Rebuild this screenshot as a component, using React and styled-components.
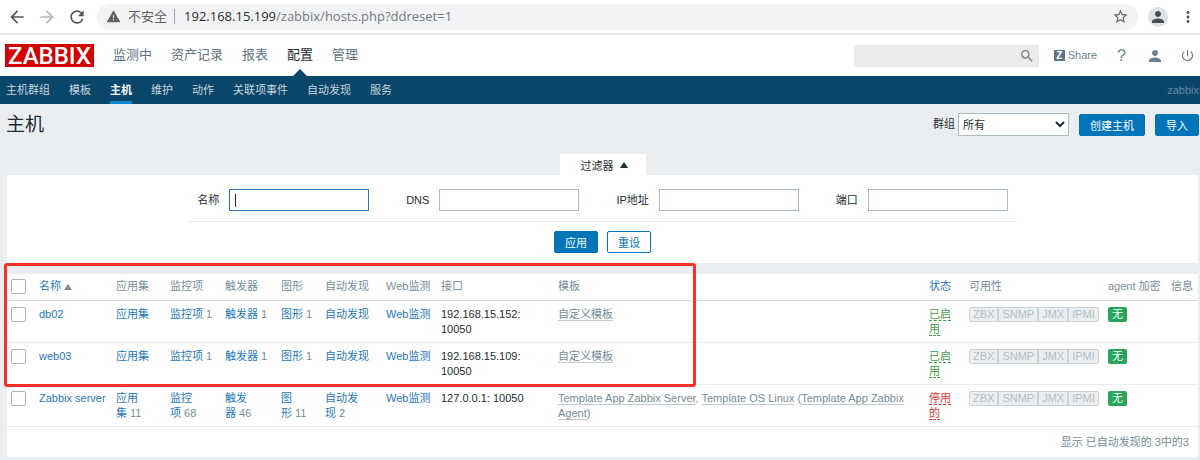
import React from 'react'
import styled, { createGlobalStyle } from 'styled-components';
import {
  MdArrowBack,
  MdArrowForward,
  MdRefresh,
  MdWarning,
  MdStarBorder,
  MdPerson,
  MdMoreVert,
  MdSearch,
  MdPowerSettingsNew,
} from 'react-icons/md';

const GlobalStyle = createGlobalStyle`
  * {
    box-sizing: border-box;
  }
  body {
    margin: 0;
    background: #ebeef0;
    color: #1f2c33;
    font-family: "Liberation Sans", "Noto Sans CJK SC", sans-serif;
    font-size: 11px;
    line-height: 15px;
  }
  a {
    color: #1f78bb;
    text-decoration: none;
  }
  button, input, select {
    font-family: inherit;
    font-size: 11px;
    margin: 0;
  }
`;

/* browser bar */
const BrowserBar = styled.div`
  display: flex;
  align-items: center;
  height: 35px;
  padding: 0 3px 0 7px;
  background: #fff;
  border-bottom: 2px solid #e8e8e8;
`;

const BarButton = styled.button`
  display: flex;
  padding: 0;
  border: 0;
  background: none;
  color: ${props => props.$dim ? '#b4b6b9' : '#55585c'};
  margin-right: 10px;
`;

const Address = styled.div`
  flex: 1;
  display: flex;
  align-items: center;
  height: 26px;
  padding: 0 9px;
  border-radius: 13px;
  background: #f1f3f4;
  color: #5f6368;
  font-family: "Open Sans", "Noto Sans CJK SC", sans-serif;
  font-size: 13px;
`;

const Unsafe = styled.span`
  margin-left: 7px;
  padding-right: 7px;
  border-right: 1px solid #a0a3a7;
`;

const Url = styled.span`
  flex: 1;
  margin-left: 9px;
  color: #75797e;
`;

const Domain = styled.span`
  color: #2b2d30;
`;

const Avatar = styled.button`
  display: flex;
  align-items: center;
  justify-content: center;
  width: 20px;
  height: 20px;
  margin: 0 11px 0 10px;
  padding: 0;
  border: 0;
  border-radius: 50%;
  background: #dee1e6;
  color: #4a4e57;
`;

/* zabbix header */
const Header = styled.header`
  display: flex;
  align-items: center;
  height: 41px;
  padding: 0 5px;
  background: #fff;
`;

const Logo = styled.a`
  width: 89px;
  height: 23px;
  background: #d40000;
  color: #fff;
  font-family: Roboto, sans-serif;
  font-size: 24px;
  font-weight: 500;
  line-height: 24px;
  text-align: center;
`;

const MainMenu = styled.nav`
  flex: 1;
  display: flex;
  gap: 19px;
  margin-left: 19px;
`;

const MainLink = styled.a`
  position: relative;
  height: 41px;
  color: ${props => props.$active ? '#1f2c33' : '#5f7380'};
  font-size: 13px;
  line-height: 39px;

  &::after {
    content: '';
    display: ${props => props.$active ? 'block' : 'none'};
    position: absolute;
    left: 50%;
    bottom: 0;
    margin-left: -7px;
    border: 7px solid transparent;
    border-top-width: 0;
    border-bottom-color: #0a466a;
  }
`;

const Search = styled.form`
  display: flex;
  align-items: center;
  width: 185px;
  height: 22px;
  background: #ebebeb;
`;

const SearchInput = styled.input`
  flex: 1;
  min-width: 0;
  border: 0;
  background: none;
`;

const IconButton = styled.button`
  display: flex;
  padding: 0 4px;
  border: 0;
  background: none;
  color: #6c8290;
`;

const Tools = styled.div`
  display: flex;
  align-items: center;
  gap: 16px;
  margin-left: 15px;

  a {
    display: flex;
    align-items: center;
    color: #6c8290;
  }
`;

const ShareMark = styled.span`
  width: 11px;
  height: 11px;
  margin-right: 3px;
  background: #5d7685;
  color: #fff;
  font-size: 10px;
  font-weight: bold;
  line-height: 11px;
  text-align: center;
`;

const Help = styled.span`
  padding: 0 4px;
  font-size: 16px;
`;

const SubMenu = styled.nav`
  display: flex;
  gap: 19px;
  height: 28px;
  padding: 0 1px 0 6px;
  background: #0a466a;
`;

const SubLink = styled.a`
  height: 28px;
  border-bottom: 3px solid ${props => props.$active ? '#0f86d0' : 'transparent'};
  color: ${props => props.$active ? '#fff' : '#c6d5de'};
  font-weight: ${props => props.$active ? 'bold' : 'normal'};
  line-height: 28px;
`;

const ServerName = styled.span`
  margin-left: auto;
  color: #6188a0;
  line-height: 28px;
`;

/* title row */
const TitleBar = styled.div`
  display: flex;
  align-items: center;
  gap: 10px;
  padding: 9px 1px 0 6px;
`;

const Title = styled.h1`
  flex: 1;
  margin: 0;
  font-size: 19px;
  font-weight: normal;
  line-height: 23px;
`;

const GroupLabel = styled.label`
  display: flex;
  align-items: center;
  gap: 3px;
`;

const Select = styled.select`
  width: 111px;
  height: 23px;
  padding: 0;
  border: 1px solid #acbbc2;
  border-radius: 0;
  background: #fff;
  color: #1f2c33;
`;

const Button = styled.button`
  height: 22px;
  padding: 0 10px;
  border: 1px solid #0275b8;
  border-radius: 2px;
  background: ${props => props.$alt ? '#fff' : '#0275b8'};
  color: ${props => props.$alt ? '#0275b8' : '#fff'};
`;

/* filter */
const Main = styled.main`
  padding: 18px 2px 3px 7px;
`;

const TabRow = styled.div`
  display: flex;
  justify-content: center;
`;

const FilterTab = styled.button`
  display: flex;
  align-items: center;
  gap: 6px;
  height: 21px;
  padding: 0 18px 0 21px;
  border: 0;
  border-radius: 2px 2px 0 0;
  background: #fff;
  color: #1f2c33;
`;

const Triangle = styled.span`
  display: inline-block;
  border: 4px solid transparent;
  border-top: 0;
  border-bottom: 6px solid ${props => props.$color};
`;

const FilterPanel = styled.form`
  display: flex;
  flex-direction: column;
  align-items: center;
  padding: 14px 0 10px;
  background: #fff;
`;

const Fields = styled.div`
  display: flex;
  gap: 37px;
  padding: 0 10px 10px;
  border-bottom: 1px solid #ebeef0;
`;

const Field = styled.label`
  display: flex;
  align-items: center;
  gap: 10px;
`;

const TextInput = styled.input`
  width: 140px;
  height: 22px;
  padding: 0 5px;
  border: 1px solid #acbbc2;
  border-radius: 0;
  background: #fff;
  outline: none;

  &:focus {
    border-color: #2f76bb;
    caret-color: transparent;
    background: linear-gradient(#1f2c33, #1f2c33) 5px 4px / 1px 13px no-repeat #fff;
  }
`;

const Actions = styled.div`
  display: flex;
  gap: 9px;
  margin-top: 9px;
`;

/* hosts list */
const List = styled.section`
  position: relative;
  margin-top: 11px;
  background: #fff;
`;

const Mark = styled.div`
  position: absolute;
  top: -11px;
  left: -3px;
  width: 692px;
  height: 124px;
  border: 3px solid #ff3028;
  border-radius: 3px;
  pointer-events: none;
`;

const Table = styled.table`
  width: 100%;
  table-layout: fixed;
  border-collapse: separate;
  border-spacing: 0;
`;

const Th = styled.th`
  height: 27px;
  padding: 0 5px 2px;
  border-bottom: 1px solid #d5dce0;
  color: #768d99;
  font-weight: normal;
  text-align: left;
  white-space: nowrap;
`;

const Td = styled.td`
  height: 42px;
  padding: 6px 5px 5px;
  border-bottom: 1px solid #ebeef0;
  color: ${props => props.$grey ? '#768d99' : '#1f2c33'};
  vertical-align: top;
`;

const Checkbox = styled.input`
  display: block;
  appearance: none;
  width: 15px;
  height: 15px;
  margin: 0 0 0 -1px;
  border: 1px solid #acb6bb;
  border-radius: 2px;
  background: #fff;
`;

const Template = styled.a`
  border-bottom: 1px solid #c3ccd1;
  color: #768d99;
`;

const Status = styled.a`
  border-bottom: 1px dashed;
  color: ${props => props.$on ? '#429e47' : '#e33734'};
`;

const Availability = styled.div`
  display: inline-flex;
  height: 15px;
  border: 1px solid #ccd2d6;
  border-radius: 2px;
  background: #ebeef0;
  color: #b4bec4;
  line-height: 13px;
  vertical-align: top;
`;

const Agent = styled.span`
  padding: 0 3px;

  & + & {
    border-left: 2px solid #ccd2d6;
  }
`;

const Badge = styled.span`
  display: inline-block;
  height: 15px;
  padding: 0 4px;
  border-radius: 2px;
  background: #27a659;
  color: #fff;
  line-height: 15px;
  vertical-align: top;
`;

const Footer = styled.div`
  padding: 8px 9px 7px;
  color: #768d99;
  text-align: right;
`;

const mainMenu = ['监测中', '资产记录', '报表', '配置', '管理'];
const subMenu = ['主机群组', '模板', '主机', '维护', '动作', '关联项事件', '自动发现', '服务'];
const filters = ['名称', 'DNS', 'IP地址', '端口'];
const linkColumns = ['应用集', '监控项', '触发器', '图形', '自动发现', 'Web监测'];
const colWidths = [27, 77, 54, 55, 56, 44, 61, 55, 117, null, 40, 139, 63, 32];

const hosts = [
  { name: 'db02', counts: [0, 1, 1, 1, 0, 0], iface: '192.168.15.152: 10050', on: true },
  { name: 'web03', counts: [0, 1, 1, 1, 0, 0], iface: '192.168.15.109: 10050', on: true },
  { name: 'Zabbix server', counts: [11, 68, 46, 11, 2, 0], iface: '127.0.0.1: 10050', on: false },
];

function HostRow({ host }) {
  return (
    <tr>
      <Td><Checkbox type="checkbox" aria-label={host.name} /></Td>
      <Td><a href="#host">{host.name}</a></Td>
      {linkColumns.map((col, i) => (
        <Td key={col} $grey>
          <a href="#list">{col}</a>{host.counts[i] > 0 && `\u00a0${host.counts[i]}`}
        </Td>
      ))}
      <Td>{host.iface}</Td>
      <Td $grey>
        {host.on ? <Template href="#template">自定义模板</Template> : (
          <>
            <Template href="#template">Template App Zabbix Server</Template>,{' '}
            <Template href="#template">Template OS Linux</Template>{' ('}
            <Template href="#template">Template App Zabbix Agent</Template>)
          </>
        )}
      </Td>
      <Td><Status href="#status" $on={host.on}>{host.on ? '已启用' : '停用的'}</Status></Td>
      <Td>
        <Availability>
          {['ZBX', 'SNMP', 'JMX', 'IPMI'].map(a => <Agent key={a}>{a}</Agent>)}
        </Availability>
      </Td>
      <Td><Badge>无</Badge></Td>
      <Td />
    </tr>
  )
}

export default function App() {
  return (
    <>
      <GlobalStyle />
      <BrowserBar>
        <BarButton aria-label="后退"><MdArrowBack size={20} /></BarButton>
        <BarButton aria-label="前进" $dim><MdArrowForward size={20} /></BarButton>
        <BarButton aria-label="刷新"><MdRefresh size={20} /></BarButton>
        <Address>
          <MdWarning size={15} />
          <Unsafe>不安全</Unsafe>
          <Url><Domain>192.168.15.199</Domain>/zabbix/hosts.php?ddreset=1</Url>
          <MdStarBorder size={17} />
        </Address>
        <Avatar aria-label="用户"><MdPerson size={18} /></Avatar>
        <MdMoreVert size={18} color="#55585c" />
      </BrowserBar>

      <Header>
        <Logo href="#home">ZABBIX</Logo>
        <MainMenu>
          {mainMenu.map(m => <MainLink key={m} href="#menu" $active={m === '配置'}>{m}</MainLink>)}
        </MainMenu>
        <Search>
          <SearchInput type="text" aria-label="搜索" />
          <IconButton type="button" aria-label="搜索"><MdSearch size={16} /></IconButton>
        </Search>
        <Tools>
          <a href="#share"><ShareMark>Z</ShareMark>Share</a>
          <a href="#help"><Help>?</Help></a>
          <a href="#profile" aria-label="用户"><MdPerson size={18} /></a>
          <a href="#logout" aria-label="退出"><MdPowerSettingsNew size={15} /></a>
        </Tools>
      </Header>
      <SubMenu>
        {subMenu.map(m => <SubLink key={m} href="#submenu" $active={m === '主机'}>{m}</SubLink>)}
        <ServerName>zabbix</ServerName>
      </SubMenu>

      <TitleBar>
        <Title>主机</Title>
        <GroupLabel>
          群组
          <Select><option>所有</option></Select>
        </GroupLabel>
        <Button>创建主机</Button>
        <Button>导入</Button>
      </TitleBar>

      <Main>
        <TabRow>
          <FilterTab>过滤器 <Triangle $color="#1f2c33" /></FilterTab>
        </TabRow>
        <FilterPanel>
          <Fields>
            {filters.map((f, i) => (
              <Field key={f}>{f}<TextInput type="text" autoFocus={i === 0} /></Field>
            ))}
          </Fields>
          <Actions>
            <Button type="button">应用</Button>
            <Button type="button" $alt>重设</Button>
          </Actions>
        </FilterPanel>

        <List>
          <Table>
            <colgroup>
              {colWidths.map((w, i) => <col key={i} width={w || undefined} />)}
            </colgroup>
            <thead>
              <tr>
                <Th><Checkbox type="checkbox" aria-label="全选" /></Th>
                <Th><a href="#sort">名称 <Triangle $color="#768d99" /></a></Th>
                {linkColumns.map(c => <Th key={c}>{c}</Th>)}
                <Th>接口</Th>
                <Th>模板</Th>
                <Th><a href="#sort">状态</a></Th>
                <Th>可用性</Th>
                <Th>agent 加密</Th>
                <Th>信息</Th>
              </tr>
            </thead>
            <tbody>
              {hosts.map(h => <HostRow key={h.name} host={h} />)}
            </tbody>
          </Table>
          <Footer>显示 已自动发现的 3中的3</Footer>
          <Mark />
        </List>
      </Main>
    </>
  )
}
